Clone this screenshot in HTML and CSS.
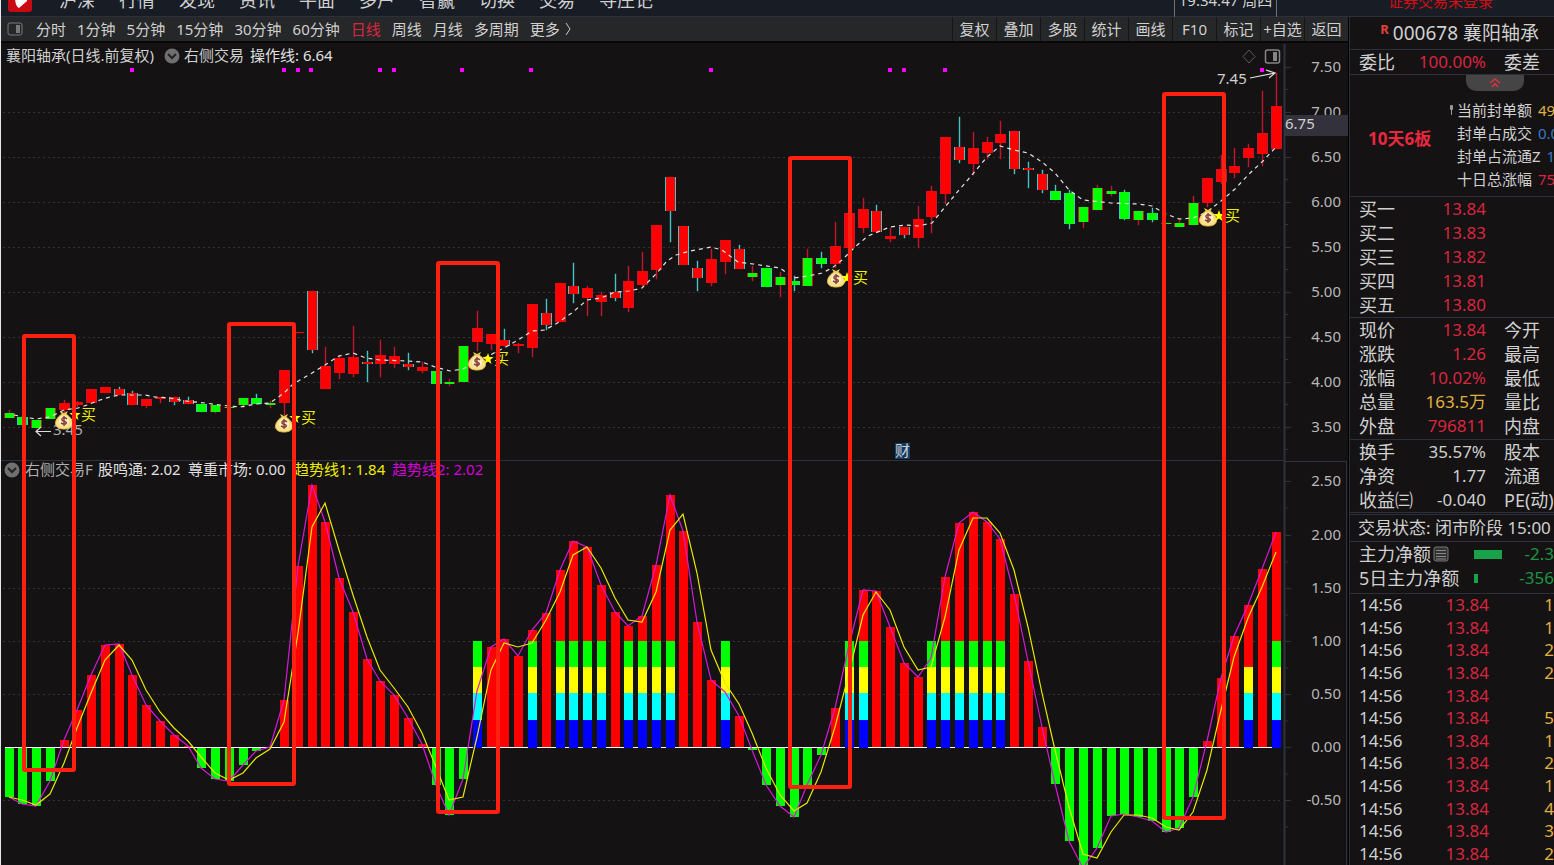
FILE: index.html
```html
<!DOCTYPE html>
<html lang="zh-CN">
<head>
<meta charset="utf-8">
<title>襄阳轴承 000678</title>
<link rel="stylesheet" href="styles.css">
</head>
<body>
<header class="topnav">
  <svg class="logo" viewBox="0 0 26 32"><rect x="1" y="0" width="24" height="27" rx="3" fill="#c80a12"/><path d="M8 12 H20 V16 L12 23 Q8 21 8 12Z" fill="#fff"/></svg>
  <nav class="menu">
    <button>沪深</button><button>行情</button><button>发现</button><button>资讯</button><button>平面</button><button>多户</button><button>智赢</button><button>切换</button><button>交易</button><button>寻庄记</button>
  </nav>
  <div class="clock">19:34:47 周四</div>
  <a class="login" href="#">证券交易未登录</a>
</header>
<div class="workspace">
  <main class="main">
    <div class="toolbar">
      <svg class="panel-icon" viewBox="0 0 16 14"><rect x="1" y="1" width="14" height="12" rx="2" fill="none" stroke="#77797b"/><rect x="9" y="3" width="4" height="8" fill="#77797b"/></svg>
      <div class="periods">
        <button>分时</button><button>1分钟</button><button>5分钟</button><button>15分钟</button><button>30分钟</button><button>60分钟</button><button class="active">日线</button><button>周线</button><button>月线</button><button>多周期</button><button class="more">更多<svg class="more-arrow" viewBox="0 0 6 14"><path d="M1 1 L5 7 L1 13" fill="none" stroke="#ccc"/></svg></button>
      </div>
      <div class="tools">
        <button>复权</button><button>叠加</button><button>多股</button><button>统计</button><button>画线</button><button>F10</button><button>标记</button><button>+自选</button><button>返回</button>
      </div>
    </div>
    <svg class="chart" id="chart" viewBox="1 43 1347 822" preserveAspectRatio="xMinYMin meet"></svg>
  </main>
  <aside class="quote">
    <h1 class="stock"><sup>R</sup><span>000678 襄阳轴承</span></h1>
    <div class="pair ratio"><span>委比</span><b class="red">100.00%</b><span>委差</span></div>
    <section class="limit">
      <button class="collapse" aria-label="收起"><svg viewBox="0 0 16 12"><path d="M3 6 L8 2 L13 6 M5 10 L8 7 L11 10" fill="none" stroke="#e0303a" stroke-width="1.6"/></svg></button>
      <div class="limit-body">
        <strong class="streak">10天6板</strong>
        <ul class="limit-list">
          <li><svg class="pin" viewBox="0 0 5 12"><rect x="1" y="1" width="3" height="5" rx="1" fill="#999"/><path d="M2.500 5 V11" stroke="#999"/></svg>当前封单额 <b class="gold">49</b></li>
          <li>封单占成交 <b class="blue">0.0</b></li>
          <li>封单占流通Z <b class="blue">1</b></li>
          <li>十日总涨幅 <b class="red">75</b></li>
        </ul>
      </div>
    </section>
    <section class="block">
      <div class="pair"><span>买一</span><b class="red">13.84</b></div>
      <div class="pair"><span>买二</span><b class="red">13.83</b></div>
      <div class="pair"><span>买三</span><b class="red">13.82</b></div>
      <div class="pair"><span>买四</span><b class="red">13.81</b></div>
      <div class="pair"><span>买五</span><b class="red">13.80</b></div>
    </section>
    <section class="block">
      <div class="pair"><span>现价</span><b class="red">13.84</b><span>今开</span></div>
      <div class="pair"><span>涨跌</span><b class="red">1.26</b><span>最高</span></div>
      <div class="pair"><span>涨幅</span><b class="red">10.02%</b><span>最低</span></div>
      <div class="pair"><span>总量</span><b class="gold">163.5万</b><span>量比</span></div>
      <div class="pair"><span>外盘</span><b class="red">796811</b><span>内盘</span></div>
    </section>
    <section class="block last">
      <div class="pair"><span>换手</span><b>35.57%</b><span>股本</span></div>
      <div class="pair"><span>净资</span><b>1.77</b><span>流通</span></div>
      <div class="pair"><span>收益㈢</span><b>-0.040</b><span>PE(动)</span></div>
    </section>
    <p class="status">交易状态: 闭市阶段 15:00</p>
    <section class="flows">
      <div class="flow"><span>主力净额</span><svg class="note" viewBox="0 0 16 16"><rect x="1" y="1" width="14" height="14" rx="2" fill="#333" stroke="#777"/><path d="M3 4.500H13M3 7.500H13M3 10.500H13M3 13H13" stroke="#888"/></svg><i class="bar wide"></i><b class="green">-2.3</b></div>
      <div class="flow"><span>5日主力净额</span><i class="bar"></i><b class="green">-356</b></div>
    </section>
    <table class="ticks"><tbody id="ticks"></tbody></table>
  </aside>
</div>
<script src="chart.js"></script>
</body>
</html>
```

FILE: styles.css
```css
* { box-sizing: border-box; }
html, body { height: 100%; }
body {
  margin: 0;
  display: flex;
  flex-direction: column;
  height: 100vh;
  overflow: hidden;
  border-left: 1px solid #e4e8ec;
  background: #141213;
  color: #d0d0d0;
  font-family: "Noto Sans", "Noto Sans CJK SC", sans-serif;
  font-size: 15px;
}
button {
  padding: 0;
  border: 0;
  background: none;
  color: inherit;
  font: inherit;
  white-space: nowrap;
}
b { font-weight: 400; }
a { text-decoration: none; }
.red { color: #d9263f; }
.gold { color: #e0b040; }
.green { color: #1e9444; }
.blue { color: #3b78c8; }

.topnav {
  flex: none;
  display: flex;
  align-items: center;
  height: 32px;
  margin-top: -15px;
  background: #181c25;
  border-bottom: 1px solid #2b303b;
  line-height: 30px;
}
.logo { flex: none; width: 26px; height: 32px; margin-left: 6px; }
.menu { display: flex; margin-left: 26px; font-size: 18px; line-height: 28px; }
.menu button { min-width: 60px; padding-bottom: 2px; text-align: left; }
.clock {
  width: 103px;
  margin-left: auto;
  padding-bottom: 2px;
  border: solid #6d7076;
  border-width: 0 1px;
  text-align: center;
  white-space: nowrap;
}
.login { margin: 0 61px 0 111px; color: #d40f14; white-space: nowrap; }

.workspace { flex: 1; display: flex; min-height: 0; }
.main { flex: 1; min-width: 0; border-right: 1px solid #000; }
.toolbar {
  display: flex;
  align-items: center;
  height: 26px;
  background: #262729;
  border-bottom: 2px solid #080808;
  line-height: 24px;
}
.panel-icon { flex: none; width: 16px; height: 14px; margin-left: 6px; }
.periods { display: flex; gap: 11px; margin-left: 13px; }
.periods .active { color: #d9263f; }
.more { display: flex; align-items: center; gap: 5px; }
.more-arrow { width: 6px; height: 14px; }
.tools { display: flex; margin-left: auto; }
.tools button { width: 44px; height: 24px; border-left: 1px solid #151515; }
.chart { display: block; width: 100%; height: auto; overflow: hidden; }
.chart text { font-size: 15px; fill: #d0d0d0; }
.chart .legend { fill: #e0e0e0; }
.chart .price { fill: #b8b8b8; text-anchor: end; }
.chart .muted { fill: #b0b0b0; }
.chart .yellow { fill: #eeee00; }
.chart .magenta { fill: #d400d8; }

.quote {
  flex: none;
  display: flex;
  flex-direction: column;
  width: 205px;
  border-left: 1px solid #2b303b;
  overflow: hidden;
  white-space: nowrap;
  font-size: 17px;
}
.stock {
  display: flex;
  justify-content: flex-end;
  gap: 4px;
  height: 33px;
  margin: 0;
  padding-right: 15px;
  border-bottom: 1px solid #2b303b;
  font-size: 19px;
  font-weight: 400;
  line-height: 32px;
}
.stock sup { color: #e0403c; font-size: 13px; font-weight: 700; line-height: 24px; }
.pair {
  display: grid;
  grid-template-columns: 37px 90px 60px;
  padding-left: 9px;
  height: 24px;
  line-height: 24px;
}
.pair span { font-size: 18px; }
.pair b { text-align: right; }
.pair b + span { padding-left: 18px; }
.ratio { height: 25px; border-bottom: 1px solid #2b303b; }
.collapse {
  display: flex;
  align-items: center;
  justify-content: center;
  width: 58px;
  height: 16px;
  margin-left: 116px;
  border-radius: 0 0 10px 10px;
  background: #454545;
}
.collapse svg { width: 16px; height: 12px; }
.limit { height: 122px; border-bottom: 1px solid #2b303b; }
.limit-body { display: flex; align-items: center; padding: 8px 0 0 18px; }
.streak { flex: none; width: 89px; padding-bottom: 12px; color: #e8283f; line-height: 22px; }
.limit-list { margin: 0; padding: 0; list-style: none; font-size: 15px; line-height: 23px; }
.limit-list li { position: relative; }
.limit-list b { padding-left: 2px; }
.pin { position: absolute; left: -8px; top: 5px; width: 5px; height: 12px; }
.block { border-bottom: 1px solid #2b303b; }
.block + .block { padding-bottom: 1px; }
.block.last { padding-bottom: 0; border-bottom: 3px double #2b303b; }
.status {
  margin: 0;
  padding-left: 8px;
  border-bottom: 1px solid #2b303b;
  line-height: 26px;
}
.flows { padding: 0 0 3px 9px; border-bottom: 1px solid #2b303b; }
.flow { position: relative; display: flex; align-items: center; height: 24px; line-height: 24px; }
.note { width: 16px; height: 16px; margin-left: 2px; }
.flow span { font-size: 18px; }
.flow b { margin-left: auto; }
.bar { position: absolute; left: 115px; width: 4px; height: 9px; background: #18a34a; }
.wide { width: 28px; }
.ticks { flex: 1; display: block; min-height: 0; padding-left: 9px; }
.ticks tbody { display: grid; grid-auto-rows: 1fr; height: 100%; }
.ticks tr { display: grid; grid-template-columns: 50px 80px 1fr; align-items: center; line-height: 22px; }
.ticks td { padding: 0; text-align: right; }
.ticks td:first-child { text-align: left; }
```

FILE: chart.js
```js
// Candle rows: body top, body bottom, wick top, wick bottom, fill (r/g), edge (r/c)
const candles = `413 418 410 418 g r|417 425 417 425 g c|420 428 420 429 g r|408 419 408 419 g r|403 410 400 415 r r|402 405 401 407 r r|389 403 389 403 r r|387 393 387 393 r r|389 395 387 395 r c|393 405 391 405 r c|399 406 399 408 r r|397 399 397 403 r r|397 402 397 405 r c|400 404 397 404 r c|404 412 404 412 g c|405 412 405 413 g r|407 408 407 408 g r|398 405 398 408 g r|398 404 394 404 g c|403 405 401 408 g r|370 403 370 415 r r|332 333 332 333 r r|291 350 291 353 r c|366 389 347 389 r r|358 373 355 379 r r|357 374 326 377 r r|362 364 351 382 r c|355 364 340 377 r r|356 364 347 368 r r|364 367 353 370 r c|367 371 362 373 r r|371 384 371 384 g c|382 384 379 386 g r|346 382 346 382 g r|328 342 311 351 r r|334 344 334 350 r r|340 346 329 346 r c|344 346 343 353 r r|304 348 304 357 r r|313 325 299 330 r c|283 322 283 322 r r|286 294 263 303 r c|288 298 286 316 r r|295 302 292 316 r r|292 298 274 301 r c|281 308 266 312 r r|271 285 252 286 r r|225 270 225 279 r r|177 211 177 242 r c|226 265 226 265 r c|268 278 261 291 r c|259 283 249 286 r r|240 262 240 274 r r|249 269 245 269 r c|273 277 266 281 g r|268 287 268 287 g c|277 285 272 297 g r|281 285 276 291 g c|258 286 249 286 g r|258 264 252 268 g c|246 264 222 268 r r|213 248 213 248 r r|209 228 198 233 r r|211 232 205 232 r c|236 239 228 242 r r|227 235 227 238 r c|219 238 206 248 r r|191 217 186 233 r r|137 194 137 204 r r|147 160 117 163 r c|148 164 132 175 r r|142 153 137 159 r r|134 143 121 159 r r|131 169 131 174 r c|168 170 162 188 r c|174 190 170 193 r c|191 200 185 200 g c|193 224 190 229 g c|207 222 207 228 g r|188 210 185 210 g r|191 194 186 196 g r|192 219 190 220 g c|211 220 211 225 g r|213 220 208 222 g c|223 224 223 224 g r|223 227 219 227 g r|203 225 196 225 g r|178 203 178 207 r r|169 182 155 184 r r|166 173 148 178 r r|148 158 144 167 r r|133 154 91 166 r r|106 149 73 149 r r`.split('|').map(s => s.split(' '));

const average = '14,415 30,418 36,419 50,417 64,410 78,408 87,405 100,400 110,397 119,395 145,395 155,397 170,398 185,401 205,403 220,405 240,407 256,404 270,403 284,393 292,385 300,380 312,373 325,365 339,356 353,353 366,358 380,360 408,361 422,362 435,367 450,371 463,369 490,355 504,348 518,340 532,331 545,330 559,322 573,312 587,300 601,298 615,292 629,291 642,288 656,274 667,261 676,255 690,251 711,247 722,250 738,262 753,264 780,268 794,278 808,276 822,273 832,268 842,260 855,247 868,236 880,231 890,227 905,225 918,226 932,223 945,207 959,190 972,175 987,157 1000,146 1014,150 1028,153 1042,162 1055,173 1069,190 1083,200 1111,203 1138,204 1152,206 1166,214 1179,219 1193,218 1207,212 1221,201 1235,189 1249,174 1263,161 1276,147';

const trend2 = [797,804,806,781,740,710,675,645,644,675,705,721,735,746,768,779,781,765,751,747,700,566,485,522,578,612,659,681,695,718,744,785,815,779,691,647,639,656,630,613,570,541,547,585,612,626,616,565,495,531,622,680,692,716,750,785,806,817,785,755,708,645,590,591,627,663,677,658,577,523,512,522,539,594,661,727,784,841,868,848,816,814,817,821,832,828,797,741,678,636,605,569,532];
const trend1 = [797,800,805,794,763,728,693,660,645,660,690,712,728,741,757,773,780,773,758,749,722,633,527,503,550,595,637,670,688,707,733,767,800,797,737,670,643,647,643,620,592,555,547,568,598,620,622,592,530,514,573,650,683,704,733,768,795,811,803,772,727,673,615,592,610,647,670,667,617,550,518,518,533,570,627,693,750,807,854,858,832,815,815,818,827,830,812,770,710,657,618,587,552];
const stacked = new Set([34,38,40,41,42,43,45,46,47,48,52,61,62,67,68,69,70,71,72,92]);

const out = [];
const rect = (x, y, w, h, f, extra = '') => out.push(`<rect x="${x}" y="${y}" width="${w}" height="${h}" fill="${f}" ${extra}/>`);
const line = (x1, y1, x2, y2, s, extra = '') => out.push(`<line x1="${x1}" y1="${y1}" x2="${x2}" y2="${y2}" stroke="${s}" ${extra}/>`);
const text = (x, y, t, cls = '') => out.push(`<text x="${x}" y="${y}" class="${cls}">${t}</text>`);
const cx = i => Math.floor(9 + i * 13.775);
const crisp = 'shape-rendering="crispEdges"';

// Grid, axis and scale labels
const gridColor = '#333335', axisColor = '#2e323c';
[112,157,202,247,292,337,382,427,535,588,641,694,800].forEach(y => line(3, y + .5, 1283, y + .5, gridColor, 'stroke-dasharray="2 3"'));
line(1, 460.5, 1284, 460.5, axisColor);
line(1284.5, 44, 1284.5, 865, axisColor, 'stroke-width="2"');
out.push(`<path d="M1285 461.500H1346.500V865" fill="none" stroke="${axisColor}"/>`);
[67,112,157,202,247,292,337,382,427].forEach((y, k) => {
  line(1285, y + .5, 1291, y + .5, axisColor);
  line(1285, y + 22.5, 1288, y + 22.5, axisColor);
  text(1341, y + 5, (7.5 - k * .5).toFixed(2), 'price');
});
[481,535,588,641,694,747,800].forEach((y, k) => {
  line(1285, y + .5, 1291, y + .5, axisColor);
  line(1285, y + 27, 1288, y + 27, axisColor);
  text(1341, y + 5, (2.5 - k * .5).toFixed(2), 'price');
});
rect(1285, 115, 63, 21, '#33323c');
text(1285, 129, '6.75');

// Legends
const chevron = (x, y) => out.push(`<circle cx="${x}" cy="${y}" r="7.500" fill="#707070"/><path d="M${x - 4} ${y - 2}l4 4l4 -4" fill="none" stroke="#222" stroke-width="2"/>`);
text(6, 61, '襄阳轴承(日线.前复权)');
chevron(172, 56);
text(184, 61, '右侧交易');
text(250, 61, '操作线: 6.64', 'legend');
chevron(12, 470);
text(25, 475, '右侧交易F', 'muted');
text(98, 475, '股鸣通: 2.02', 'legend');
text(188, 475, '尊重市场: 0.00', 'legend');
text(294, 475, '趋势线1: 1.84', 'yellow');
text(392, 475, '趋势线2: 2.02', 'magenta');
[131,283,297,310,379,393,461,530,710,889,903,944,1261].forEach(x => rect(x - 1, 68, 4, 4, '#f0f'));
out.push('<path d="M1249 50L1255 56.500L1249 63L1243 56.500Z" fill="none" stroke="#5c5c5c"/><rect x="1265.500" y="50" width="14" height="13" rx="2" fill="none" stroke="#858585" stroke-width="1.500"/><rect x="1273" y="52" width="4" height="9" fill="#858585"/>');

// Candles
candles.forEach(([t, b, h, l, f, e], i) => {
  const x = cx(i), edge = e === 'c' ? '#45c4c4' : '#c2182f', fill = f === 'g' ? '#0f0' : '#f00';
  if (+l > +h) rect(x, h, 1, l - h, edge, `stroke="${edge}" stroke-width=".4"`);
  rect(x - 5, t, 11, Math.max(1, b - t), edge, crisp);
  rect(x - 4, t, 9, Math.max(1, b - t), fill, crisp);
});
out.push(`<polyline points="${average}" fill="none" stroke="#e4e4e4" stroke-width="1.200" stroke-dasharray="4 4"/>`);

// Histogram
line(5, 747.5, 1281, 747.5, '#fff', crisp);
trend2.forEach((y, i) => {
  const x = cx(i) - 4;
  if (y > 748) rect(x, 748, 9, y - 748, '#0f0', crisp);
  else if (!(stacked.has(i) && y > 641)) rect(x, y, 9, 747 - y, '#f00', crisp);
  if (stacked.has(i)) rect(x, 641, 9, 26, '#0f0', crisp);
  if (stacked.has(i) || i === 90) {
    rect(x, 667, 9, 26, '#ff0', crisp);
    rect(x, 693, 9, 27, '#0ff', crisp);
    rect(x, 720, 9, 28, '#00f', crisp);
  }
});
const curve = (data, color) => out.push(`<polyline points="${data.map((y, i) => cx(i) + ',' + y).join(' ')}" fill="none" stroke="${color}" stroke-width="1.200"/>`);
curve(trend2, '#d818d8');
curve(trend1, '#e8e800');

// Extremes and event badge
text(53, 435, '3.45', 'muted');
out.push('<path d="M51 431.500H36M41 427L36 431.500L41 436M1250 78L1275 73M1266 70L1275 73L1269 78" fill="none" stroke="#ddd" stroke-width="1.200"/>');
text(1217, 84, '7.45');
rect(895, 443, 15, 16, '#123c68');
text(895, 456, '财');

// Buy signals: bag centre x, bag centre y, label centre y
[[64,420,415],[284,423,418],[477,361,359],[836,278,278],[1208,217,216]].forEach(([x, y, mid]) => {
  out.push(`<path d="M${x - 4} ${y - 9}L${x} ${y - 7}L${x + 4} ${y - 9}L${x + 2} ${y - 5}H${x - 2}Z" fill="#f5d040"/><path d="M${x - 2} ${y - 6}H${x + 2}C${x + 11} ${y} ${x + 11} ${y + 9} ${x} ${y + 9}C${x - 11} ${y + 9} ${x - 11} ${y} ${x - 2} ${y - 6}Z" fill="#f7e28a" stroke="#e8bc48"/><circle cx="${x}" cy="${y + 1}" r="5" fill="#fff0c8"/><path d="M${x + 3} ${y - 1}C${x} ${y - 4} ${x - 4} ${y - 1} ${x - 1} ${y + 1}C${x + 5} ${y + 2} ${x + 2} ${y + 6} ${x - 3} ${y + 3}M${x} ${y - 4}V${y + 6}" fill="none" stroke="#8a4038" stroke-width="1.500"/>`);
  const star = Array.from({length: 10}, (_, k) => {
    const r = k % 2 ? 2.4 : 6, a = -Math.PI / 2 + k * Math.PI / 5;
    return (x + 11 + r * Math.cos(a)).toFixed(1) + ',' + (mid + r * Math.sin(a)).toFixed(1);
  }).join(' ');
  out.push(`<polygon points="${star}" fill="#ff0"/>`);
  text(x + 17, mid + 5, '买', 'yellow');
});

// Highlight frames
[[24,336,50,434],[229,324,65,460],[438,263,60,549],[790,158,60,629],[1164,94,60,724]].forEach(([x, y, w, h]) =>
  rect(x, y, w, h, 'none', 'stroke="#ff2012" stroke-width="4" rx="1"'));

document.getElementById('chart').innerHTML = out.join('');
document.getElementById('ticks').innerHTML = ['1','1','2','2','','5','1','2','1','4','3','2']
  .map(v => `<tr><td>14:56</td><td class="red">13.84</td><td class="gold">${v}</td></tr>`).join('');
```
